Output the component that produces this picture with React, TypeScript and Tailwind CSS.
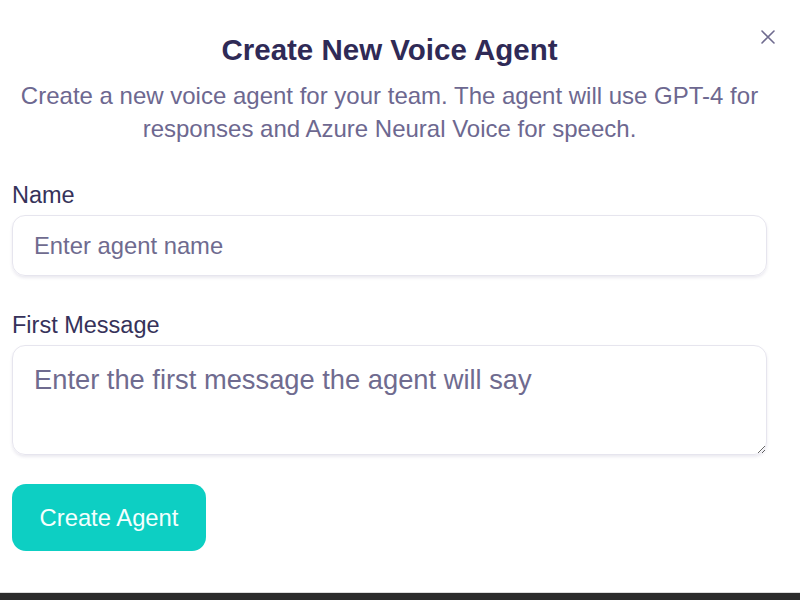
import React from "react";

export default function App() {
  return (
    <div
      className="w-[800px] h-[600px] flex flex-col bg-white overflow-hidden"
      style={{ fontFamily: '"Liberation Sans", Arial, sans-serif' }}
    >
      <div className="flex-1 relative pl-[12px] pr-[33px] pt-[32px]">
        <button
          aria-label="Close"
          className="absolute left-[760px] top-[29px] w-[16px] h-[16px] flex items-center justify-center text-[#6f6b8f]"
        >
          <svg width="16" height="16" viewBox="0 0 16 16" fill="none" stroke="currentColor" strokeWidth="1.6" strokeLinecap="round">
            <path d="M2 2 L14 14 M14 2 L2 14" />
          </svg>
        </button>
        <h2 className="text-center text-[29.5px] leading-[36px] font-bold text-[#2f2a56]">
          Create New Voice Agent
        </h2>
        <p className="mt-[11px] text-center text-[24px] leading-[33px] text-[#6d6890] px-[6px]">
          Create a new voice agent for your team. The agent will use GPT-4 for responses and Azure Neural Voice for speech.
        </p>

        <div className="mt-[36px] flex flex-col">
          <label className="text-[23.5px] leading-[28px] text-[#36325a]">Name</label>
          <input
            placeholder="Enter agent name"
            className="mt-[6px] h-[61px] w-full rounded-[13px] border border-[#e6e5ee] px-[21px] text-[23.8px] text-[#36325a] placeholder:text-[#6f6b8f] outline-none shadow-[0_2px_3px_rgba(60,50,110,0.10)]"
          />
        </div>

        <div className="mt-[35px] flex flex-col">
          <label className="text-[23.5px] leading-[28px] text-[#36325a]">First Message</label>
          <textarea
            placeholder="Enter the first message the agent will say"
            className="mt-[6px] h-[110px] w-full rounded-[13px] border border-[#e6e5ee] px-[21px] pt-[17px] text-[27.3px] leading-[34px] text-[#36325a] placeholder:text-[#6f6b8f] outline-none shadow-[0_2px_3px_rgba(60,50,110,0.10)] resize-y"
          />
        </div>

        <button className="mt-[29px] h-[67px] w-[194px] rounded-[14px] bg-[#0dcfc3] text-[23.8px] text-[#f4fffe] flex items-center justify-center">
          Create Agent
        </button>
      </div>
      <div className="h-[8px] border-t border-[#dcdcdc] bg-[#2b2b2b]" />
    </div>
  );
}
